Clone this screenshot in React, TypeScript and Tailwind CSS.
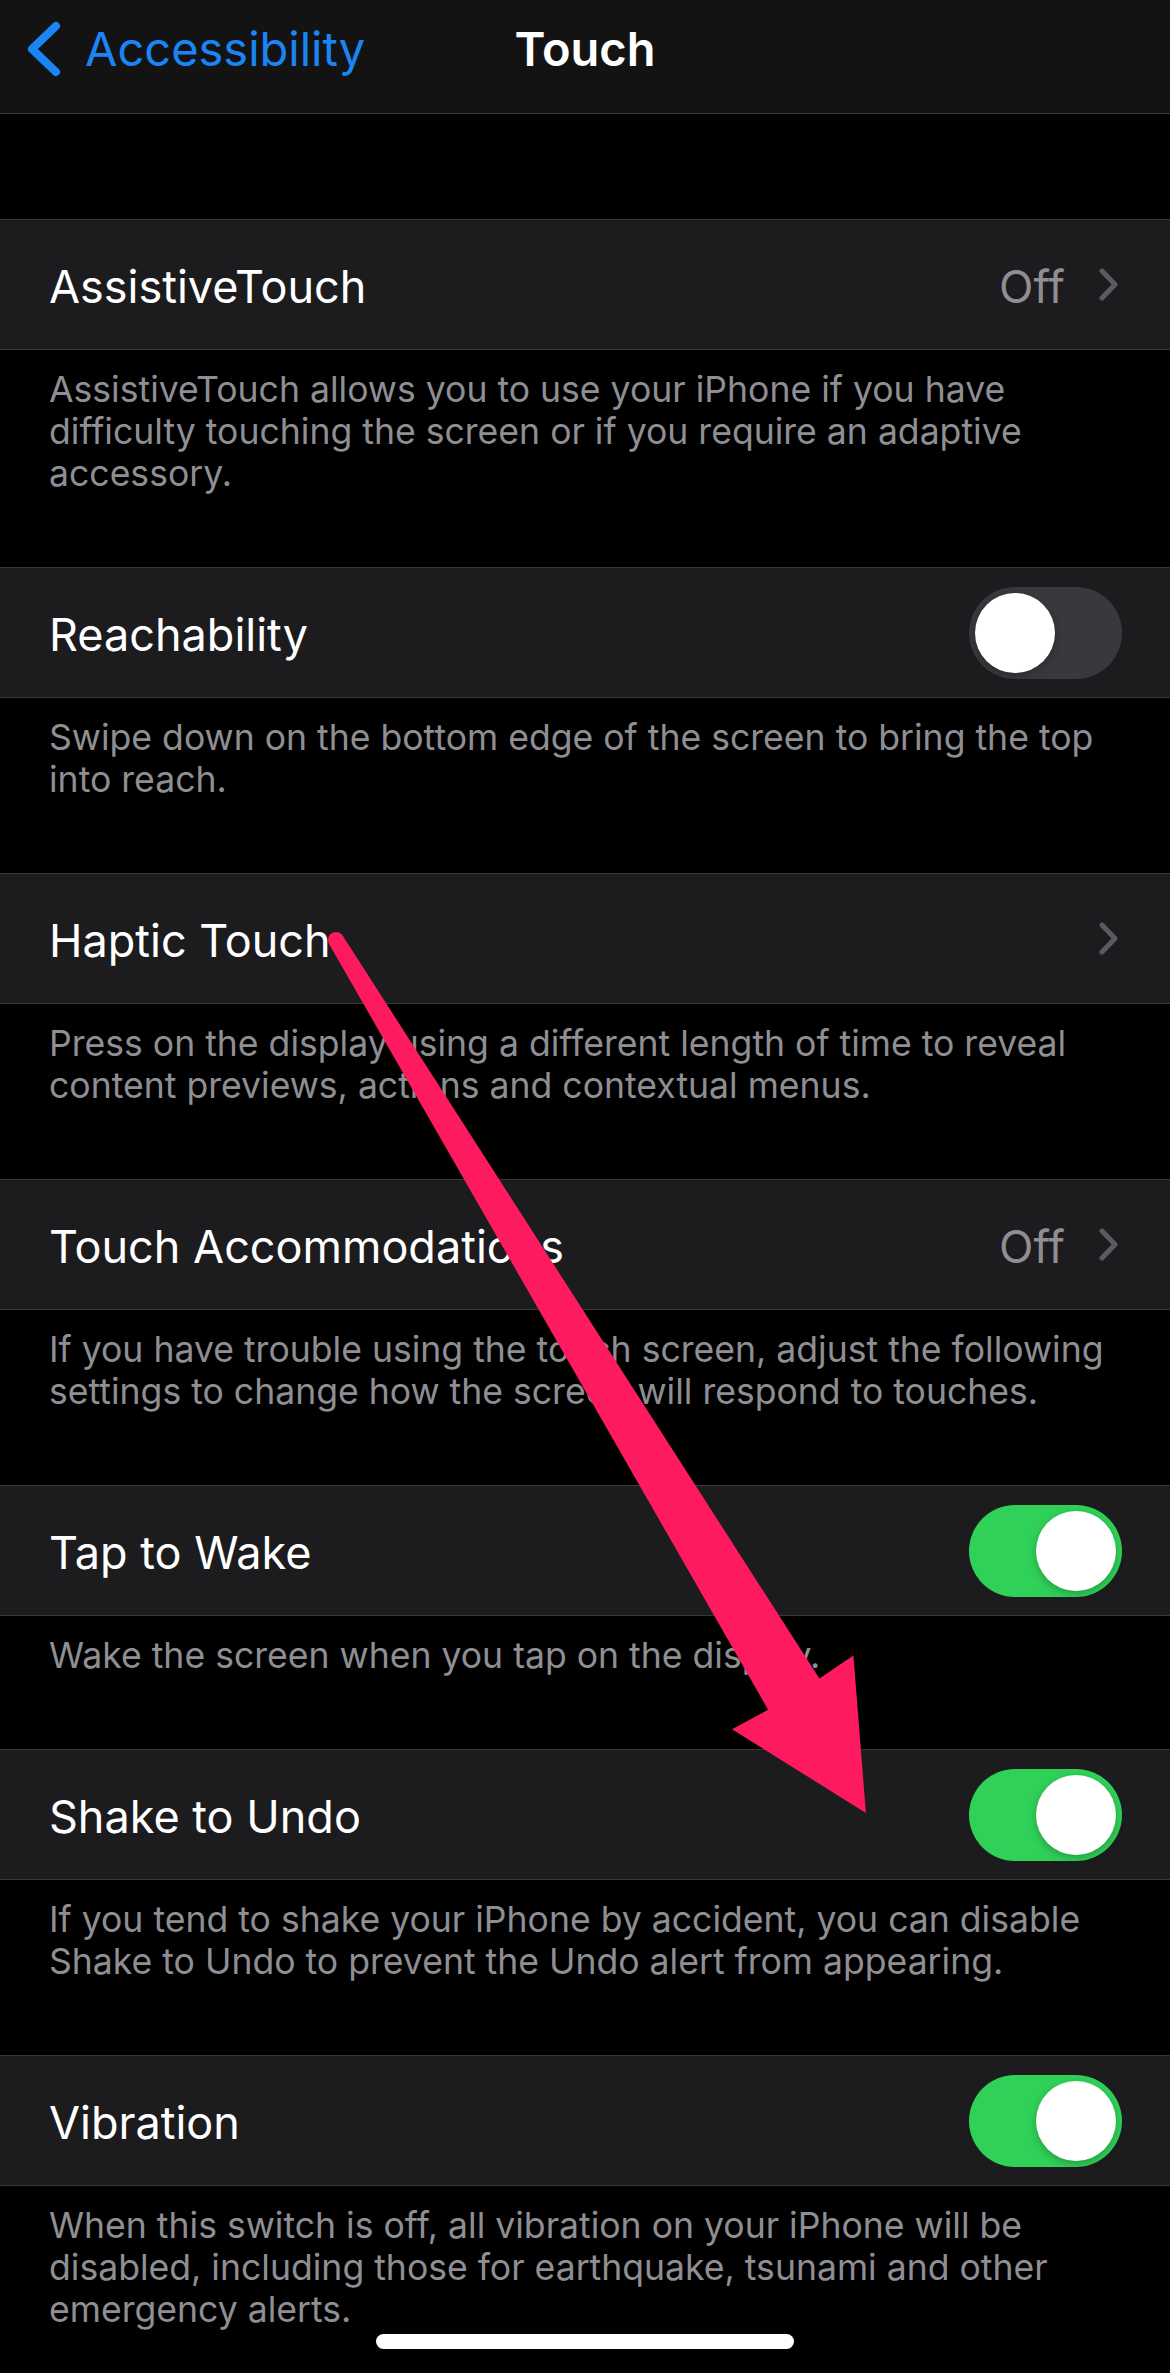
import React from 'react';

type Accessory = 'off' | 'chevron' | 'toggle-off' | 'toggle-on';

interface Row {
    title: string;
    accessory: Accessory;
    footer: string[];
}

const rows: Row[] = [
    {
        title: 'AssistiveTouch',
        accessory: 'off',
        footer: [
            'AssistiveTouch allows you to use your iPhone if you have',
            'difficulty touching the screen or if you require an adaptive',
            'accessory.',
        ],
    },
    {
        title: 'Reachability',
        accessory: 'toggle-off',
        footer: ['Swipe down on the bottom edge of the screen to bring the top', 'into reach.'],
    },
    {
        title: 'Haptic Touch',
        accessory: 'chevron',
        footer: [
            'Press on the display using a different length of time to reveal',
            'content previews, actions and contextual menus.',
        ],
    },
    {
        title: 'Touch Accommodations',
        accessory: 'off',
        footer: [
            'If you have trouble using the touch screen, adjust the following',
            'settings to change how the screen will respond to touches.',
        ],
    },
    {
        title: 'Tap to Wake',
        accessory: 'toggle-on',
        footer: ['Wake the screen when you tap on the display.'],
    },
    {
        title: 'Shake to Undo',
        accessory: 'toggle-on',
        footer: [
            'If you tend to shake your iPhone by accident, you can disable',
            'Shake to Undo to prevent the Undo alert from appearing.',
        ],
    },
    {
        title: 'Vibration',
        accessory: 'toggle-on',
        footer: [
            'When this switch is off, all vibration on your iPhone will be',
            'disabled, including those for earthquake, tsunami and other',
            'emergency alerts.',
        ],
    },
];

function Chevron() {
    return (
        <svg width="19" height="33" viewBox="0 0 19 33" className="mr-[4px] shrink-0">
            <polyline
                points="3,3 16,16.5 3,30"
                fill="none"
                stroke="#5b5b5f"
                strokeWidth="5"
                strokeLinecap="round"
                strokeLinejoin="round"
            />
        </svg>
    );
}

function Toggle({ on }: { on: boolean }) {
    return (
        <div
            className={`w-[153px] h-[92px] rounded-full p-[6px] flex shrink-0 ${
                on ? 'bg-[#30d158] justify-end' : 'bg-[#39393d] justify-start'
            }`}
        >
            <div className="w-[80px] h-[80px] rounded-full bg-white shadow-[0_3px_8px_rgba(0,0,0,0.25)]" />
        </div>
    );
}

function Cell({ row }: { row: Row }) {
    return (
        <div className="h-[131px] bg-[#1c1c1e] border-y border-[#38383a] flex items-center pl-[49px] pr-[48px]">
            <span className="flex-1 text-[45px] leading-none text-white pt-[3px]">{row.title}</span>
            {row.accessory === 'off' && (
                <div className="flex items-center gap-[34px]">
                    <span className="text-[45px] leading-none text-[#8e8e93] pt-[3px]">Off</span>
                    <Chevron />
                </div>
            )}
            {row.accessory === 'chevron' && <Chevron />}
            {row.accessory === 'toggle-off' && <Toggle on={false} />}
            {row.accessory === 'toggle-on' && <Toggle on={true} />}
        </div>
    );
}

function Footer({ lines }: { lines: string[] }) {
    return (
        <div className="pl-[49px] pt-[19px] pb-[72px] text-[35.6px] leading-[42px] text-[#8e8e93] whitespace-nowrap">
            {lines.map((l, i) => (
                <div key={i}>{l}</div>
            ))}
        </div>
    );
}

export default function App() {
    return (
        <div
            className="relative w-[1170px] h-[2373px] overflow-hidden bg-black"
            style={{ fontFamily: 'Inter, "Liberation Sans", sans-serif' }}
        >
            {/* nav bar */}
            <div className="h-[114px] bg-[#131313] border-b border-[#38383a]">
                <div className="h-[97px] grid grid-cols-[1fr_auto_1fr] items-center">
                    <div className="flex items-center pl-[27px]">
                        <svg width="34" height="56" viewBox="0 0 34 56" className="shrink-0">
                            <polyline
                                points="29,5 5,28 29,51"
                                fill="none"
                                stroke="#1a85f5"
                                strokeWidth="8"
                                strokeLinecap="round"
                                strokeLinejoin="round"
                            />
                        </svg>
                        <span className="ml-[24px] text-[47px] leading-none text-[#1a85f5]">Accessibility</span>
                    </div>
                    <span className="text-[47px] leading-none font-semibold text-white">Touch</span>
                    <div />
                </div>
            </div>

            <div className="h-[105px]" />

            {rows.map((r) => (
                <div key={r.title}>
                    <Cell row={r} />
                    <Footer lines={r.footer} />
                </div>
            ))}

            {/* annotation arrow */}
            <svg
                className="absolute inset-0 pointer-events-none"
                width="1170"
                height="2373"
                viewBox="0 0 1170 2373"
            >
                <polygon
                    points="342.8,935.8 819.4,1678.5 853.4,1655.6 865.9,1813 732,1729.2 768.1,1709.7 329.2,944.2"
                    fill="#fe1a5e"
                />
                <circle cx="336" cy="940" r="8" fill="#fe1a5e" />
            </svg>

            {/* home indicator */}
            <div className="absolute bottom-[24px] left-1/2 -translate-x-1/2 w-[418px] h-[15px] rounded-full bg-white" />
        </div>
    );
}
